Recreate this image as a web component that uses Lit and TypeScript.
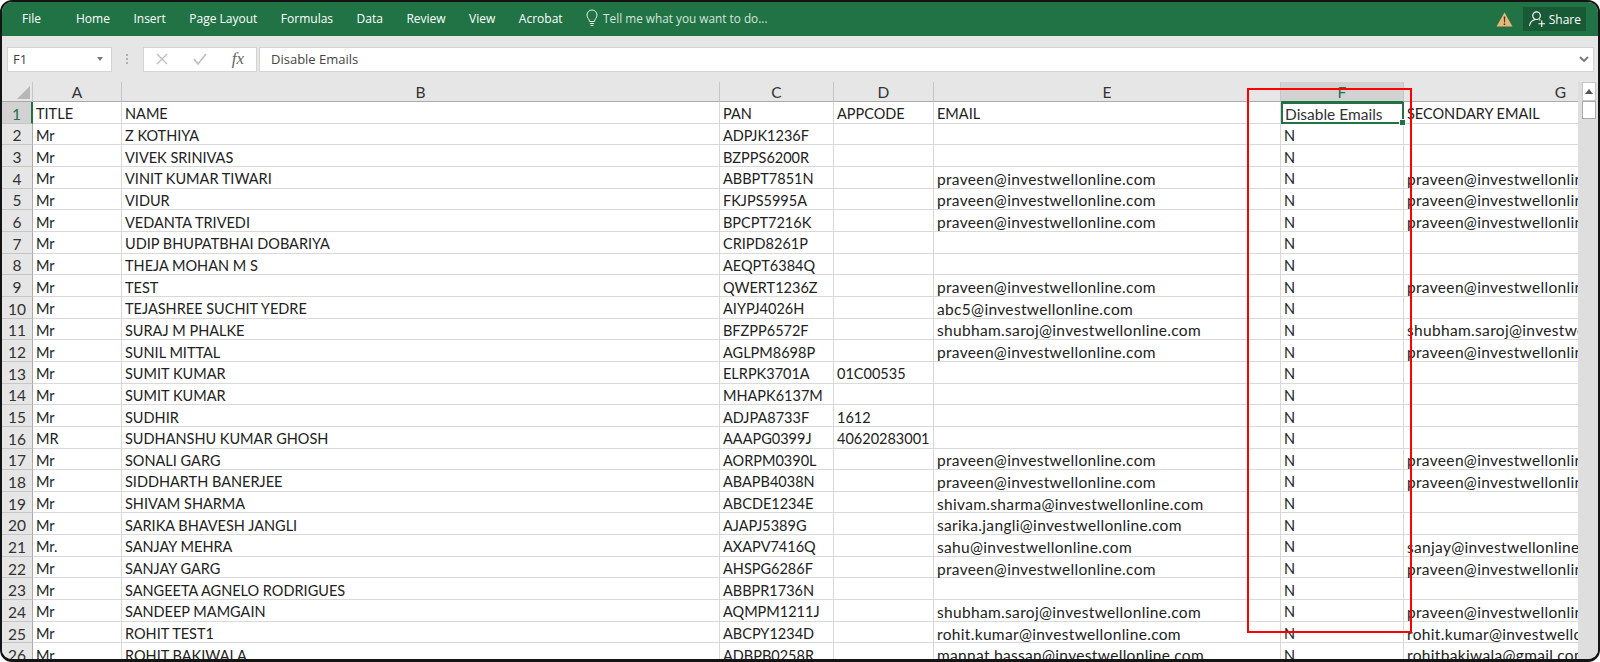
import { LitElement, html, css } from "lit";
import { customElement } from "lit/decorators.js";

const P = "praveen@investwellonline.com";
const rows: string[][] = [
  ["TITLE","NAME","PAN","APPCODE","EMAIL","Disable Emails","SECONDARY EMAIL"],
  ["Mr","Z KOTHIYA","ADPJK1236F","","","N",""],
  ["Mr","VIVEK SRINIVAS","BZPPS6200R","","","N",""],
  ["Mr","VINIT KUMAR TIWARI","ABBPT7851N","",P,"N",P],
  ["Mr","VIDUR","FKJPS5995A","",P,"N",P],
  ["Mr","VEDANTA TRIVEDI","BPCPT7216K","",P,"N",P],
  ["Mr","UDIP BHUPATBHAI DOBARIYA","CRIPD8261P","","","N",""],
  ["Mr","THEJA MOHAN M S","AEQPT6384Q","","","N",""],
  ["Mr","TEST","QWERT1236Z","",P,"N",P],
  ["Mr","TEJASHREE SUCHIT YEDRE","AIYPJ4026H","","abc5@investwellonline.com","N",""],
  ["Mr","SURAJ M PHALKE","BFZPP6572F","","shubham.saroj@investwellonline.com","N","shubham.saroj@investwellonline.com"],
  ["Mr","SUNIL MITTAL","AGLPM8698P","",P,"N",P],
  ["Mr","SUMIT KUMAR","ELRPK3701A","01C00535","","N",""],
  ["Mr","SUMIT KUMAR","MHAPK6137M","","","N",""],
  ["Mr","SUDHIR","ADJPA8733F","1612","","N",""],
  ["MR","SUDHANSHU KUMAR GHOSH","AAAPG0399J","40620283001","","N",""],
  ["Mr","SONALI GARG","AORPM0390L","",P,"N",P],
  ["Mr","SIDDHARTH BANERJEE","ABAPB4038N","",P,"N",P],
  ["Mr","SHIVAM SHARMA","ABCDE1234E","","shivam.sharma@investwellonline.com","N",""],
  ["Mr","SARIKA BHAVESH JANGLI","AJAPJ5389G","","sarika.jangli@investwellonline.com","N",""],
  ["Mr.","SANJAY MEHRA","AXAPV7416Q","","sahu@investwellonline.com","N","sanjay@investwellonline.com"],
  ["Mr","SANJAY GARG","AHSPG6286F","",P,"N",P],
  ["Mr","SANGEETA AGNELO RODRIGUES","ABBPR1736N","","","N",""],
  ["Mr","SANDEEP MAMGAIN","AQMPM1211J","","shubham.saroj@investwellonline.com","N",P],
  ["Mr","ROHIT TEST1","ABCPY1234D","","rohit.kumar@investwellonline.com","N","rohit.kumar@investwellonline.com"],
  ["Mr","ROHIT BAKIWALA","ADBPB0258R","","mannat.bassan@investwellonline.com","N","rohitbakiwala@gmail.com"],
];
const cols = ["A","B","C","D","E","F","G"];
const tabs = ["Home","Insert","Page Layout","Formulas","Data","Review","View","Acrobat"];

@customElement("app-root")
export class AppRoot extends LitElement {
  static styles = css`
    :host { display: block; width: 1600px; height: 662px; background: #fff; font-family: "Open Sans", "Noto Sans", sans-serif; }
    .frame { box-sizing: border-box; width: 1600px; height: 662px; border: 2px solid #141414; border-bottom-width: 3px; border-radius: 12px; overflow: hidden; display: flex; flex-direction: column; position: relative; background: #e6e6e6; }
    .ribbon { height: 34px; flex: none; box-sizing: border-box; padding: 0 0 2px 20px; background: #217346; color: #fff; display: flex; align-items: center; font-size: 12px; }
    .ribbon .file { width: 54px; }
    .ribbon .tab { margin-right: 23.5px; }
    .tell { display: flex; align-items: center; gap: 4px; color: #d5e5db; font-size: 11.800px; margin-left: -1px; }
    .right { margin-left: auto; display: flex; align-items: center; gap: 10px; margin-right: 12px; margin-top: 2px; }
    .share { background: #185a36; display: flex; align-items: center; gap: 3px; height: 24px; padding: 0 5px 0 5px; }
    .fbar { height: 46px; flex: none; display: flex; align-items: center; padding: 0 4px 0 5px; box-sizing: border-box; font-size: 13px; color: #444; }
    .box { background: #fff; border: 1px solid #d4d4d4; height: 25px; box-sizing: border-box; display: flex; align-items: center; }
    .name { width: 105px; padding: 0 5px; justify-content: space-between; }
    .caret { width: 0; height: 0; border: 3px solid transparent; border-top: 4px solid #777; border-bottom: 0; margin-right: 3px; }
    .dots { width: 31px; display: flex; justify-content: center; }
    .btns { width: 114px; justify-content: space-between; padding: 0 12px; }
    .fx { font-family: "Liberation Serif", serif; font-style: italic; font-size: 17px; color: #666; }
    .input { flex: 1; margin-left: 2px; padding: 0 4px 0 11px; justify-content: space-between; }
    .body { flex: 1; min-height: 0; display: flex; overflow: hidden; }
    .sheet { width: 1576px; flex: none; display: grid; grid-template-columns: 31px 89px 598px 114px 100px 347px 123px 314px; grid-auto-rows: 21.66px; grid-template-rows: 20px; align-content: start; overflow: hidden; font-family: Lato, "Open Sans", sans-serif; font-size: 14.500px; color: #222; }
    .corner { background: #e6e6e6; border-right: 1px solid #c6c6c6; border-bottom: 1px solid #ababab; box-sizing: border-box; display: flex; align-items: flex-end; justify-content: flex-end; padding: 0 2px 2px 0; }
    .ch { background: #e6e6e6; border-right: 1px solid #c6c6c6; border-bottom: 1px solid #ababab; box-sizing: border-box; display: flex; align-items: center; justify-content: center; font-size: 15.500px; color: #333; }
    .ch.sel { background: #d2d2d2; color: #217346; border-bottom-color: #217346; }
    .rh { background: #e6e6e6; border-right: 1px solid #ababab; border-bottom: 1px solid #c6c6c6; box-sizing: border-box; display: flex; align-items: center; justify-content: center; padding-top: 3px; font-size: 15.500px; color: #333; }
    .rh.sel { background: #d2d2d2; color: #217346; border-right: 2px solid #217346; }
    .c { background: #fff; border-right: 1px solid #d9d9d9; border-bottom: 1px solid #d9d9d9; box-sizing: border-box; display: flex; align-items: center; padding: 3px 0 0 3px; white-space: nowrap; overflow: hidden; min-width: 0; }
    .c.mail { font-size: 15.500px; letter-spacing: 0.33px; overflow: visible; }
    .c.active { border: 2px solid #217346; padding: 2px 0 0 2px; font-size: 15.500px; color: #333; position: relative; overflow: visible; }
    .handle { position: absolute; right: -4px; bottom: -4px; width: 5px; height: 5px; background: #217346; border: 1px solid #fff; }
    .scroll { flex: 1; background: #dedede; display: flex; flex-direction: column; padding: 0 2px 0 4px; }
    .sbtn { height: 17px; display: flex; align-items: center; justify-content: center; background: #fff; border: 1px solid #c6c6c6; }
    .sthumb { height: 16px; background: #fff; border: 1px solid #ababab; }
    .red { position: absolute; left: 1245px; top: 86px; width: 165px; height: 545px; box-sizing: border-box; border: 2px solid #f00; pointer-events: none; }
  `;
  render() {
    return html`<div class="frame">
      <div class="ribbon">
        <span class="file">File</span>
        ${tabs.map((t) => html`<span class="tab">${t}</span>`)}
        <span class="tell">
          <svg width="14" height="18" viewBox="0 0 14 18" fill="none" stroke="#e3eee7" stroke-width="1"><path d="M4.5 12.5C4.5 10 2 9 2 6a5 5 0 0 1 10 0c0 3-2.500 4-2.500 6.500zM5 14.500h4M5.500 16.500h3"/></svg>
          Tell me what you want to do...
        </span>
        <span class="right">
          <svg width="17" height="15" viewBox="0 0 17 15"><path d="M8.500 0.500 16.500 14.500H0.500z" fill="#e8b778"/><path d="M7.700 4.500h1.600l-.3 6h-1zM7.700 11.500h1.600v1.600H7.700z" fill="#4a3a20"/></svg>
          <span class="share">
            <svg width="18" height="18" viewBox="0 0 19 19" fill="none" stroke="#fff" stroke-width="1.200"><circle cx="9" cy="6" r="4"/><path d="M1.500 17c.5-4 3-6.500 6.500-7M12 10l1 1M11 14.500h7M14.500 11v7"/></svg>
            Share
          </span>
        </span>
      </div>
      <div class="fbar">
        <div class="box name">F1<span class="caret"></span></div>
        <div class="dots"><svg width="3" height="11" viewBox="0 0 3 11" fill="#b0b0b0"><rect width="2" height="2" x="0"/><rect width="2" height="2" y="4"/><rect width="2" height="2" y="8"/></svg></div>
        <div class="box btns">
          <svg width="12" height="12" viewBox="0 0 12 12" stroke="#bdbdbd" stroke-width="1.300" fill="none"><path d="M1 1l10 10M11 1L1 11"/></svg>
          <svg width="14" height="12" viewBox="0 0 14 12" stroke="#bdbdbd" stroke-width="1.600" fill="none"><path d="M1 6l4 5 8-10"/></svg>
          <span class="fx">fx</span>
        </div>
        <div class="box input">Disable Emails
          <svg width="10" height="6" viewBox="0 0 10 6" stroke="#777" stroke-width="1.800" fill="none"><path d="M1 1l4 4 4-4"/></svg>
        </div>
      </div>
      <div class="body">
        <div class="sheet">
          <div class="corner"><svg width="13" height="13" viewBox="0 0 13 13"><path d="M13 0V13H0z" fill="#b7b7b7"/></svg></div>
          ${cols.map((c) => html`<div class="ch ${c === "F" ? "sel" : ""}">${c}</div>`)}
          ${rows.map((r, i) => html`
            <div class="rh ${i === 0 ? "sel" : ""}">${i + 1}</div>
            ${r.map((v, j) => html`<div class="c ${i === 0 && j === 5 ? "active" : ""} ${v.includes("@") ? "mail" : ""}">${v}${i === 0 && j === 5 ? html`<span class="handle"></span>` : ""}</div>`)}
          `)}
        </div>
        <div class="scroll">
          <div class="sbtn"><svg width="8" height="5" viewBox="0 0 8 5"><path d="M4 0l4 5H0z" fill="#555"/></svg></div>
          <div class="sthumb"></div>
        </div>
      </div>
      <div class="red"></div>
    </div>`;
  }
}
